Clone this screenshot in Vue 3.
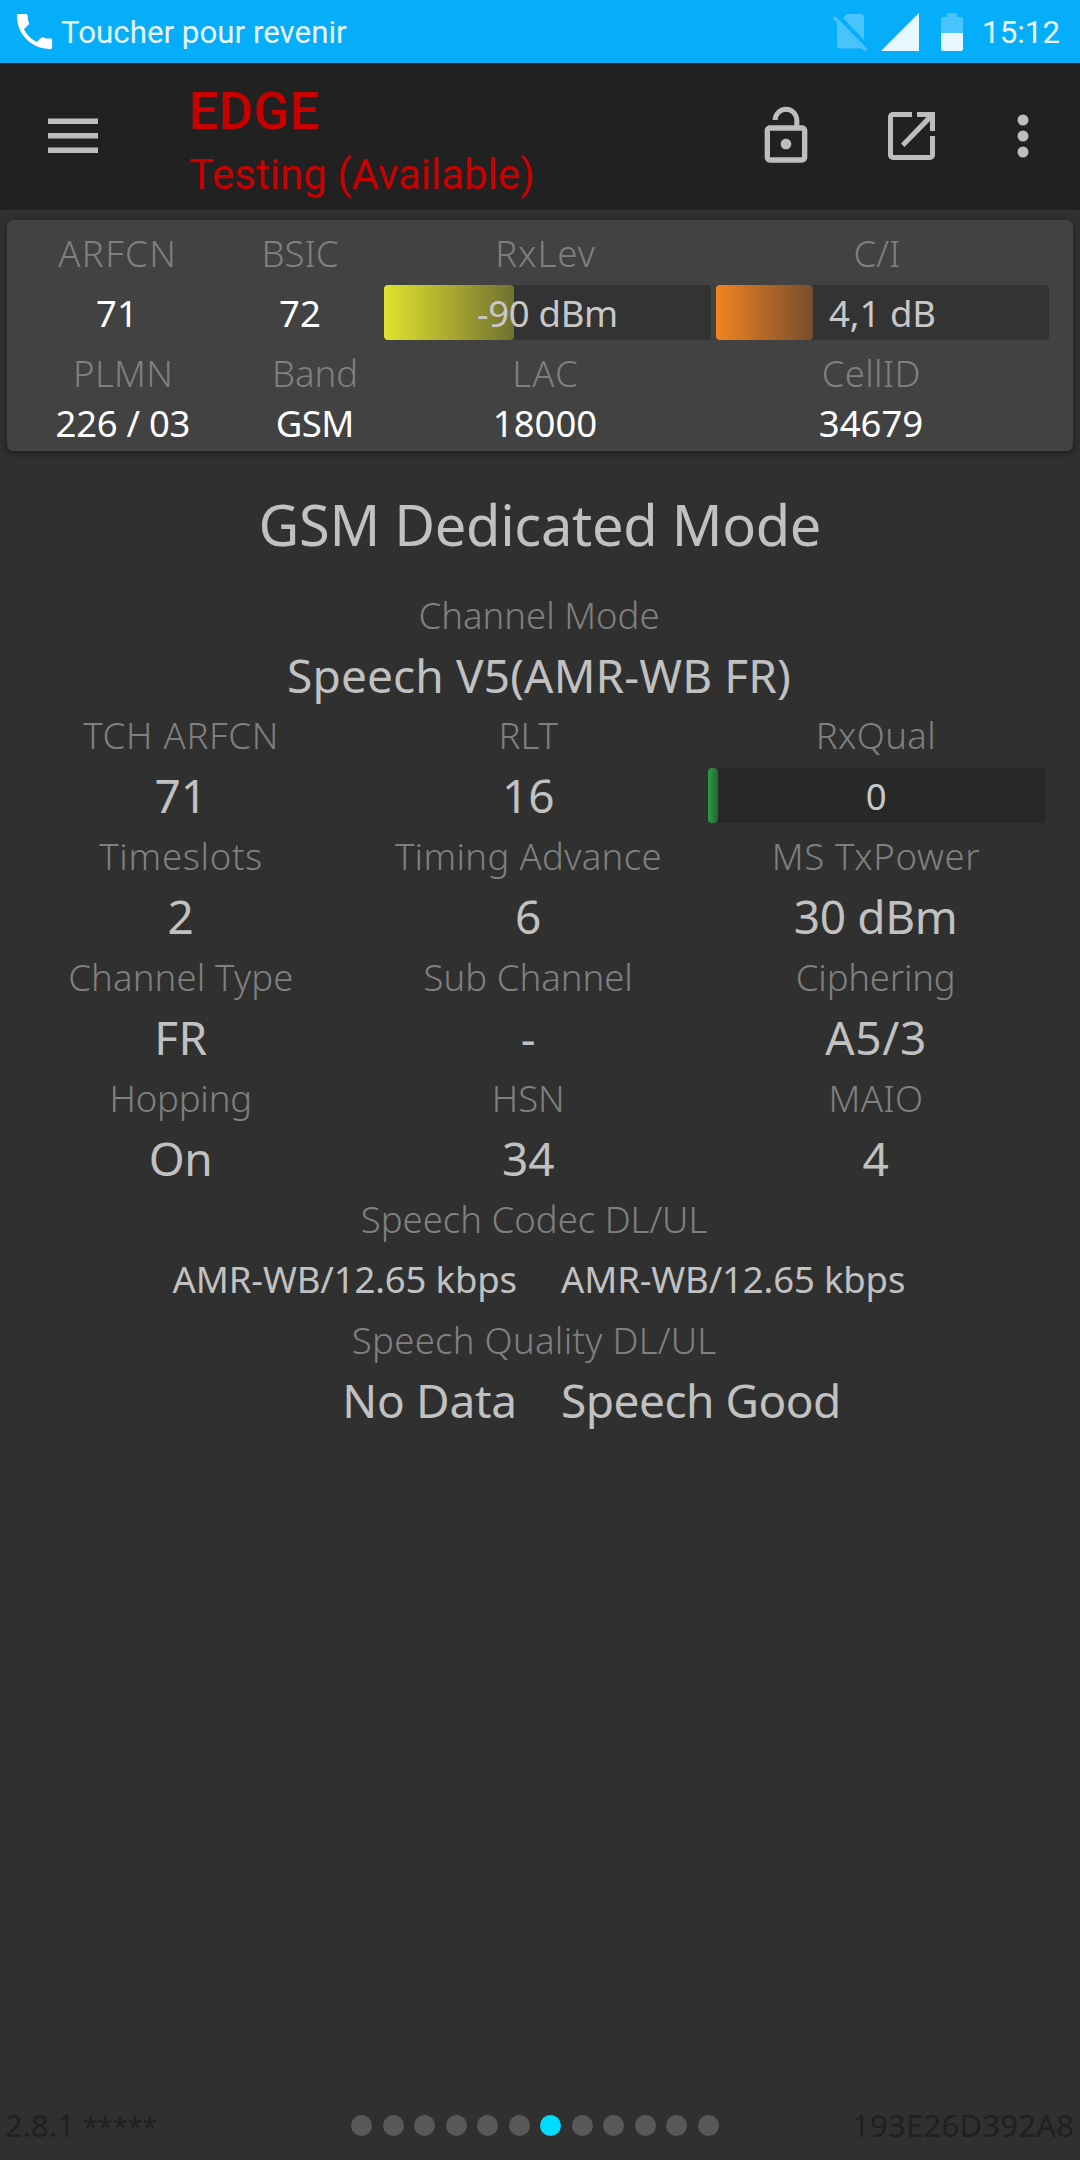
<template>
  <div class="screen">
    <div class="status-bar">
      <svg class="phone" viewBox="0 0 24 24">
        <path d="M6.600 10.800c1.400 2.800 3.800 5.100 6.600 6.600l2.200-2.200c.3-.3.7-.4 1-.2 1.100.4 2.300.6 3.600.6.6 0 1 .2 1 .7V20c0 .6-.4 1-1 1-9.400 0-17-7.600-17-17 0-.6.2-1 .7-1h3.800c.6 0 1 .4 1 1 0 1.200.2 2.500.6 3.600.1.3 0 .7-.2 1z" />
      </svg>
      <span class="call">Toucher pour revenir</span>
      <svg class="no-sim" viewBox="0 0 34 38">
        <path d="M14 1h13.500a3.500 3.500 0 0 1 3.500 3.500v22.500L10 5z" />
        <path d="M4 9l25 26q-1 .5-2 .5H7.500a3.500 3.500 0 0 1-3.500-3.500z" />
        <path class="slash" d="M1.800 5L32.200 36.200" />
      </svg>
      <svg class="signal" viewBox="0 0 38 38">
        <path d="M38 0v38H0z" />
      </svg>
      <svg class="battery" viewBox="0 0 22 38">
        <path class="empty" d="M6 0h10v4h4a2 2 0 0 1 2 2v14H0V6a2 2 0 0 1 2-2h4z" />
        <path d="M0 20h22v16a2 2 0 0 1-2 2H2a2 2 0 0 1-2-2z" />
      </svg>
      <span class="clock">15:12</span>
    </div>

    <header class="toolbar">
      <svg class="menu" viewBox="0 0 50 36">
        <path d="M0 0.500h50v5.500H0zM0 15h50v5.500H0zM0 29.500h50v5.500H0z" />
      </svg>
      <div class="network">
        <div class="network-type"><span :style="spacing(0.4)">EDGE</span></div>
        <div class="network-state">Testing (Available)</div>
      </div>
      <svg class="lock" viewBox="0 0 24 24">
        <path d="M12 17c1.100 0 2-.9 2-2s-.9-2-2-2-2 .9-2 2 .9 2 2 2zm6-9h-1V6c0-2.760-2.240-5-5-5S7 3.240 7 6h1.900c0-1.710 1.390-3.100 3.100-3.100 1.710 0 3.100 1.390 3.100 3.100v2H6c-1.100 0-2 .9-2 2v10c0 1.100.9 2 2 2h12c1.100 0 2-.9 2-2V10c0-1.100-.9-2-2-2zm0 12H6V10h12v10z" />
      </svg>
      <svg class="open" viewBox="0 0 47 48">
        <path d="M24 0v5H5v38h37V24h5v19a5 5 0 0 1-5 5H5a5 5 0 0 1-5-5V5a5 5 0 0 1 5-5zM29 0h18v19h-5V9L16.500 35 13 31.500 38.500 5H29z" />
      </svg>
      <svg class="more" viewBox="0 0 12 44">
        <circle cx="6" cy="6" r="5.500" />
        <circle cx="6" cy="22" r="5.500" />
        <circle cx="6" cy="38" r="5.500" />
      </svg>
    </header>

    <section class="card">
      <div class="card-row head-row label">
        <div v-for="c in cell.head" :key="c.text"><span :style="spacing(c.ls)">{{ c.text }}</span></div>
      </div>
      <div class="card-row meter-row">
        <div>71</div>
        <div>72</div>
        <div class="meter">
          <div class="fill yellow" :style="{ width: '130px' }"></div>
          <span :style="spacing(-0.3)">-90 dBm</span>
        </div>
        <div class="meter">
          <div class="fill orange" :style="{ width: '97px' }"></div>
          <span>4,1 dB</span>
        </div>
      </div>
      <div class="card-row plmn-row label">
        <div v-for="c in cell.ids" :key="c.text"><span :style="spacing(c.ls)">{{ c.text }}</span></div>
      </div>
      <div class="card-row plmn-row id-row">
        <div v-for="c in cell.values" :key="c.text"><span :style="spacing(c.ls)">{{ c.text }}</span></div>
      </div>
    </section>

    <main class="details">
      <h1><span :style="spacing(-0.3)">GSM Dedicated Mode</span></h1>
      <div class="label line top"><span>Channel Mode</span></div>
      <div class="value line first"><span :style="spacing(0.14)">Speech V5(AMR-WB FR)</span></div>

      <div class="grid">
        <div v-for="item in items" :key="item.label" class="item">
          <div class="label line"><span :style="spacing(item.ls)">{{ item.label }}</span></div>
          <div v-if="item.meter" class="meter-line">
            <div class="meter dark">
              <div class="fill green" :style="{ width: '10px' }"></div>
              <span>{{ item.value }}</span>
            </div>
          </div>
          <div v-else class="value line"><span :style="spacing(item.vls)">{{ item.value }}</span></div>
        </div>
      </div>

      <div class="label line speech"><span>Speech Codec DL/UL</span></div>
      <div class="pair small">
        <div><span :style="spacing(-0.15)">AMR-WB/12.65 kbps</span></div>
        <div><span :style="spacing(-0.15)">AMR-WB/12.65 kbps</span></div>
      </div>
      <div class="label line speech"><span :style="spacing(0.3)">Speech Quality DL/UL</span></div>
      <div class="pair">
        <div><span :style="spacing(-0.3)">No Data</span></div>
        <div><span :style="spacing(-0.5)">Speech Good</span></div>
      </div>
    </main>

    <footer class="footer">
      <div class="version">2.8.1 <span class="stars">*****</span></div>
      <div class="dots">
        <i v-for="n in 12" :key="n" :class="{ active: n === page }"></i>
      </div>
      <div class="device"><span :style="spacing(0.25)">193E26D392A8</span></div>
    </footer>
  </div>
</template>

<script setup>
import { ref, reactive } from 'vue';

const page = ref(7);

const cell = reactive({
  head: [
    { text: 'ARFCN', ls: 1.4 },
    { text: 'BSIC', ls: 0 },
    { text: 'RxLev', ls: 1 },
    { text: 'C/I', ls: 0 }
  ],
  ids: [
    { text: 'PLMN', ls: 0.4 },
    { text: 'Band', ls: 0 },
    { text: 'LAC', ls: 1.2 },
    { text: 'CellID', ls: 0.3 }
  ],
  values: [
    { text: '226 / 03', ls: -0.3 },
    { text: 'GSM', ls: -0.6 },
    { text: '18000', ls: 0 },
    { text: '34679', ls: 0 }
  ]
});

const items = reactive([
  { label: 'TCH ARFCN', ls: 0.75, value: '71', vls: 0 },
  { label: 'RLT', ls: 0, value: '16', vls: 0 },
  { label: 'RxQual', ls: 0.4, value: '0', meter: true },
  { label: 'Timeslots', ls: 0.7, value: '2', vls: 0 },
  { label: 'Timing Advance', ls: 0.35, value: '6', vls: 0 },
  { label: 'MS TxPower', ls: 0.65, value: '30 dBm', vls: -0.4 },
  { label: 'Channel Type', ls: 0.15, value: 'FR', vls: 0.5 },
  { label: 'Sub Channel', ls: 0, value: '-', vls: 0 },
  { label: 'Ciphering', ls: -0.2, value: 'A5/3', vls: 0.6 },
  { label: 'Hopping', ls: -0.2, value: 'On', vls: -0.5 },
  { label: 'HSN', ls: 0, value: '34', vls: 0 },
  { label: 'MAIO', ls: 0.4, value: '4', vls: 0 }
]);

// trailing letter gap is pulled back so the text stays centred
function spacing(px) {
  return { letterSpacing: px + 'px', marginRight: -px + 'px' };
}
</script>

<style>
body {
  margin: 0;
  background: #303030;
}
</style>

<style scoped>
.screen {
  display: flex;
  flex-direction: column;
  width: 1080px;
  height: 2160px;
  overflow: hidden;
  background: #303030;
  color: #c1c1c1;
  font-family: "Noto Sans", sans-serif;
  font-size: 36.5px;
  white-space: nowrap;
}

.status-bar {
  display: flex;
  align-items: center;
  box-sizing: border-box;
  height: 63px;
  padding: 0 20px 0 11px;
  background: #06adf9;
  color: #e6f7ff;
  font-family: Roboto, sans-serif;
  font-size: 31.3px;
  line-height: 63px;
}

.status-bar svg {
  flex: none;
  fill: #e6f7ff;
}

.status-bar .phone {
  width: 47px;
  height: 47px;
  fill: #fff;
}

.call {
  flex: 1;
  padding-top: 2px;
  padding-left: 3px;
}

.clock {
  padding-top: 2px;
}

.status-bar .no-sim {
  width: 34px;
  height: 38px;
  margin-right: 14px;
  fill: #48c3fb;
}

.no-sim .slash {
  stroke: #48c3fb;
  stroke-width: 3.5;
  stroke-linecap: round;
}

.signal {
  width: 38px;
  height: 38px;
  margin-right: 22px;
}

.battery {
  width: 22px;
  height: 38px;
  margin-right: 19px;
}

.battery .empty {
  fill: #48c3fb;
}

.toolbar {
  display: flex;
  align-items: center;
  height: 147px;
  background: #212121;
}

.toolbar svg {
  flex: none;
  margin-bottom: 2px;
  fill: #bdbdbd;
}

.menu {
  width: 50px;
  height: 36px;
  margin-left: 48px;
}

.network {
  flex: 1;
  margin-left: 91px;
  padding-top: 16px;
  color: #c80000;
  font-family: Roboto, sans-serif;
}

.network-type {
  font-size: 52.5px;
  font-weight: 500;
  line-height: 60px;
}

.network-state {
  font-size: 42px;
  line-height: 68px;
}

.lock {
  width: 64px;
  height: 64px;
  margin-right: 70px;
}

.open {
  width: 47px;
  height: 48px;
  margin-right: 82px;
}

.more {
  width: 12px;
  height: 44px;
  margin-right: 51px;
}

.card {
  box-sizing: border-box;
  height: 231px;
  margin: 10px 7px 0;
  padding-left: 11px;
  border-radius: 6px;
  background: #424242;
  box-shadow: 0 2px 6px rgba(0, 0, 0, 0.45);
  color: #fff;
}

.card-row {
  display: grid;
  text-align: center;
}

.label {
  color: #808080;
  font-weight: 300;
}

.head-row {
  grid-template-columns: 198px 168px 322px 342px;
  height: 65px;
  line-height: 67px;
}

.meter-row {
  grid-template-columns: 198px 168px 327px 333px;
  height: 55px;
  line-height: 57px;
}

.meter-row .meter:last-child {
  margin-left: 5px;
  margin-right: -5px;
}

.plmn-row {
  grid-template-columns: 210px 174px 286px 366px;
  line-height: 66px;
}

.id-row {
  line-height: 34px;
}

.meter {
  position: relative;
  height: 55px;
  border-radius: 3px;
  background: #333;
  color: #c8c8c8;
  line-height: 57px;
  text-align: center;
}

.meter span {
  position: relative;
}

.meter.dark {
  background: #282828;
}

.fill {
  position: absolute;
  left: 0;
  top: 0;
  height: 100%;
  border-radius: 4px;
}

.yellow {
  background: linear-gradient(90deg, #e2e22f, #717131);
}

.orange {
  background: linear-gradient(90deg, #f38320, #754d2c);
}

.green {
  background: linear-gradient(90deg, #26a043, #2a6136);
}

.details {
  flex: 1;
  text-align: center;
}

h1 {
  margin: 33px 0 23px;
  font-size: 56px;
  font-weight: 400;
  line-height: 80px;
}

.label.line {
  line-height: 56px;
}

.value.line {
  font-size: 46px;
  line-height: 65px;
}

.label.top,
.value.first {
  padding-right: 2px;
}

.value.first {
  height: 64px;
}

.grid {
  display: grid;
  grid-template-columns: repeat(3, 347.5px);
  padding-left: 7px;
}

.item {
  height: 121px;
}

.meter-line {
  padding: 5px 5px 0 6px;
}

.speech {
  padding-right: 12px;
}

.pair {
  display: grid;
  grid-template-columns: 517px 1fr;
  column-gap: 44px;
  font-size: 46px;
  line-height: 65px;
  text-align: left;
}

.pair div:first-child {
  text-align: right;
}

.pair.small {
  font-size: 36.5px;
}

.footer {
  display: grid;
  grid-template-columns: 346px auto 1fr;
  align-items: center;
  height: 70px;
  padding: 0 6px 0 5px;
  color: #202020;
  font-size: 31px;
}

.stars {
  font-size: 27px;
}

.dots {
  display: flex;
  gap: 10.5px;
}

.dots i {
  width: 21px;
  height: 21px;
  border-radius: 50%;
  background: #585858;
}

.dots .active {
  background: #00dcff;
}

.device {
  text-align: right;
}
</style>
